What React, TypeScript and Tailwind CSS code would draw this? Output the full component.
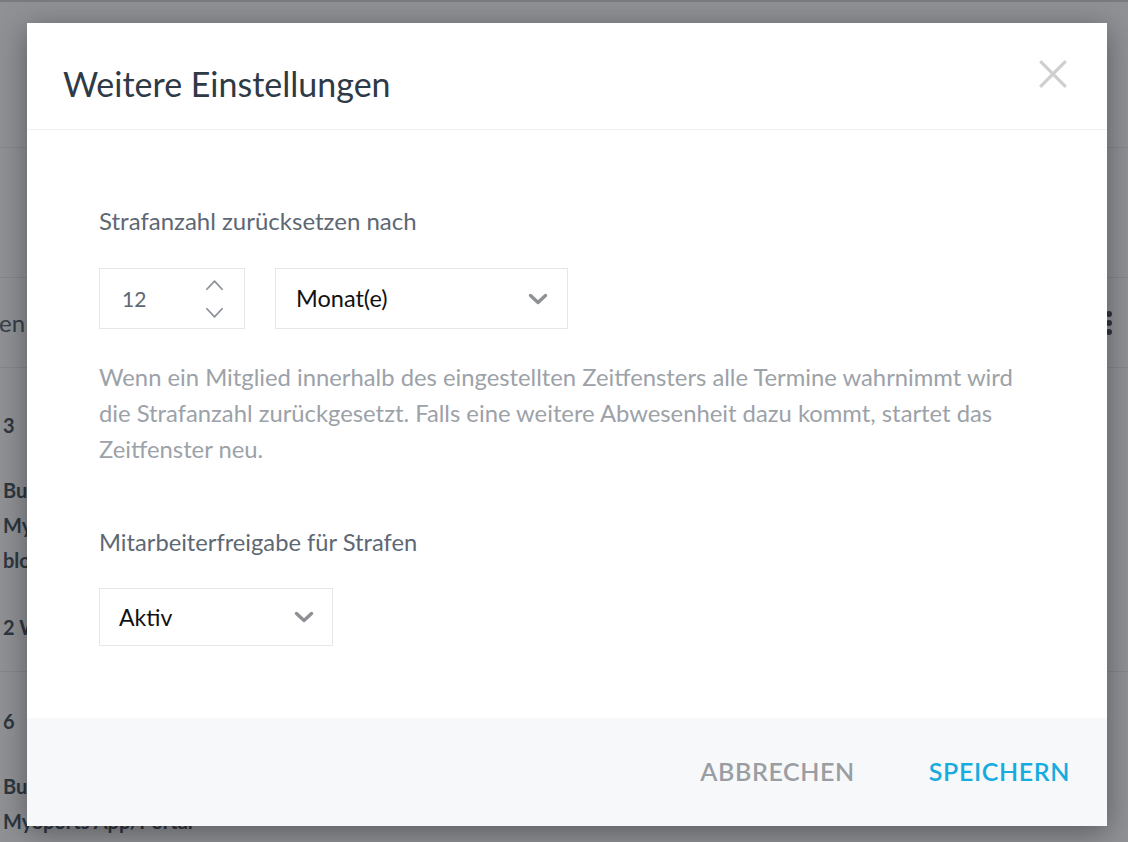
import React from "react";

function ChevronBold({ className = "" }: { className?: string }) {
  return (
    <svg viewBox="0 0 20 12" className={className} fill="none">
      <path d="M2.5 2.5 L10 9.5 L17.5 2.5" stroke="currentColor" strokeWidth="3.4" strokeLinecap="round" strokeLinejoin="round" />
    </svg>
  );
}

function ChevronThin({ up = false }: { up?: boolean }) {
  return (
    <svg viewBox="0 0 20 14" className="w-[19px] h-[14px] text-[#8b9198]" fill="none">
      <path
        d={up ? "M2 11.5 L10 3 L18 11.5" : "M2 2.5 L10 11 L18 2.5"}
        stroke="currentColor"
        strokeWidth="1.8"
        strokeLinecap="round"
        strokeLinejoin="round"
      />
    </svg>
  );
}

function BackgroundPage() {
  return (
    <div className="w-full h-[842px] overflow-hidden bg-[#fbfcfd] text-[#4c5762] font-['Lato',sans-serif]">
      <div className="h-[148px] border-b border-[#e6e8eb] border-t-2 border-t-[#cfd3d8]" />
      <div className="h-[130px] border-b border-[#e6e8eb]" />
      <div className="h-[90px] border-b border-[#e6e8eb] flex items-center justify-between">
        <span className="text-[24px] text-[#5c6772] -ml-[1px]">en</span>
        <div className="flex flex-col gap-[3px] pr-[16px]">
          <span className="w-[6px] h-[6px] rounded-full bg-[#4c5762]" />
          <span className="w-[6px] h-[6px] rounded-full bg-[#4c5762]" />
          <span className="w-[6px] h-[6px] rounded-full bg-[#4c5762]" />
        </div>
      </div>
      <div className="h-[304px] border-b border-[#e6e8eb] pl-[3px] pt-[40px] font-bold text-[20px] leading-[35px]">
        <div className="mb-[30px]">3</div>
        <div>Buchung über</div>
        <div>MySports App/Portal</div>
        <div>blockiert</div>
        <div className="mt-[32px]">2 Wochen</div>
      </div>
      <div className="pl-[3px] pt-[32px] font-bold text-[20px] leading-[35px]">
        <div className="mb-[30px]">6</div>
        <div>Buchung über</div>
        <div>MySports App/Portal</div>
      </div>
    </div>
  );
}

export default function App() {
  return (
    <div className="relative w-[1128px] h-[842px] overflow-hidden font-['Lato',sans-serif]">
      <BackgroundPage />
      {/* overlay */}
      <div className="absolute inset-0 bg-[#0a0f16]/45" />
      {/* modal */}
      <div className="absolute left-[27px] top-[23px] w-[1080px] h-[803px] bg-white flex flex-col shadow-[0_6px_28px_rgba(0,0,0,0.38)]">
        <div className="h-[107px] shrink-0 border-b border-[#f0f1f3] flex items-start justify-between pl-[36px] pr-[38px] pt-[37px]">
          <h2 className="text-[34px] leading-[48px] text-[#2e3a46] font-normal">Weitere Einstellungen</h2>
          <button className="-mt-[2px] text-[#cfcfcf]">
            <svg viewBox="0 0 30 30" className="w-[32px] h-[32px]" fill="none">
              <path d="M3 3 L27 27 M27 3 L3 27" stroke="currentColor" strokeWidth="3" />
            </svg>
          </button>
        </div>

        <div className="flex-1 px-[72px] pt-[75px]">
          <div className="text-[24px] leading-[32px] text-[#5d6874]">Strafanzahl zurücksetzen nach</div>
          <div className="mt-[31px] flex gap-[30px]">
            <div className="w-[146px] h-[61px] border border-[#e5e6e8] flex items-center justify-between pl-[22px] pr-[20px]">
              <span className="text-[21px] text-[#5d6874]">12</span>
              <div className="flex flex-col gap-[14px]">
                <ChevronThin up />
                <ChevronThin />
              </div>
            </div>
            <div className="w-[293px] h-[61px] border border-[#e5e6e8] flex items-center justify-between pl-[20px] pr-[19px]">
              <span className="text-[23.5px] text-[#111]">Monat(e)</span>
              <ChevronBold className="w-[20px] h-[12px] text-[#8d9196]" />
            </div>
          </div>
          <p className="mt-[31px] text-[23.8px] leading-[35.8px] text-[#9ca2a8]">
            Wenn ein Mitglied innerhalb des eingestellten Zeitfensters alle Termine wahrnimmt wird
            <br />
            die Strafanzahl zurückgesetzt. Falls eine weitere Abwesenheit dazu kommt, startet das
            <br />
            Zeitfenster neu.
          </p>
          <div className="mt-[59px] text-[23.7px] leading-[32px] text-[#5d6874]">Mitarbeiterfreigabe für Strafen</div>
          <div className="mt-[30px] w-[234px] h-[58px] border border-[#e5e6e8] flex items-center justify-between pl-[19px] pr-[18px]">
            <span className="text-[23px] text-[#111]">Aktiv</span>
            <ChevronBold className="w-[20px] h-[12px] text-[#8d9196]" />
          </div>
        </div>

        <div className="h-[108px] shrink-0 bg-[#f7f8fa] flex items-center justify-end gap-[74px] pr-[37px]">
          <button className="text-[25px] font-semibold tracking-[0.6px] text-[#9a9ea3]">ABBRECHEN</button>
          <button className="text-[25px] font-semibold tracking-[0.6px] text-[#16ace0]">SPEICHERN</button>
        </div>
      </div>
    </div>
  );
}
